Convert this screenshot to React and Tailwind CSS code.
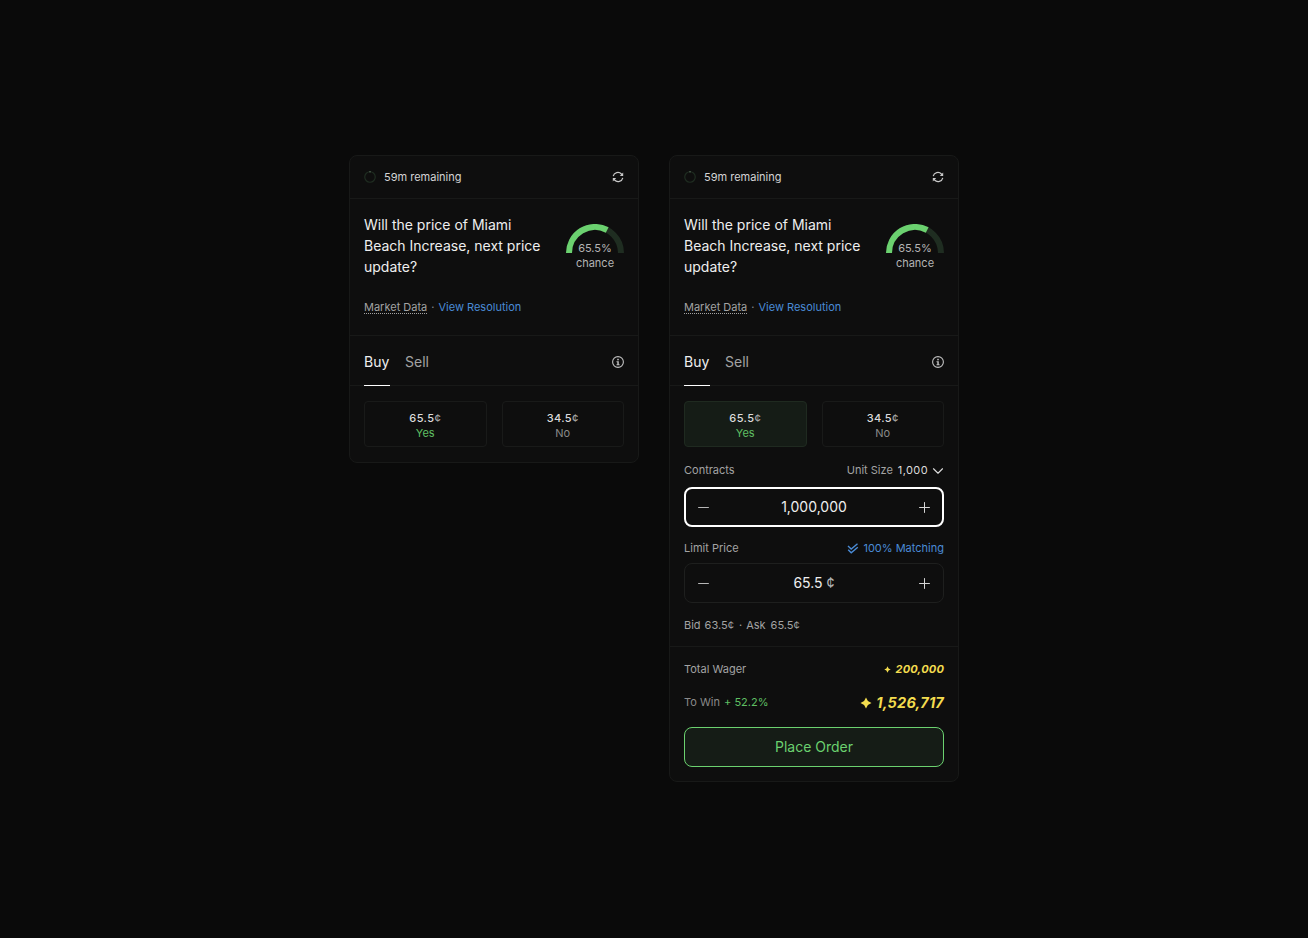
import { ChevronDown, Minus, Plus } from "lucide-react";

function RefreshIcon() {
    return (
        <svg width="12" height="12" viewBox="0 0 12 12" fill="none" className="text-[#c8c8c8]">
            <path d="M1.2 5.2 A4.8 4.8 0 0 1 9.4 3 L10.6 4.4" stroke="currentColor" strokeWidth="1.2" />
            <path d="M11.2 1.6 V5 H7.8 Z" fill="currentColor" />
            <path d="M10.8 6.8 A4.8 4.8 0 0 1 2.6 9 L1.4 7.6" stroke="currentColor" strokeWidth="1.2" />
            <path d="M0.8 10.4 V7 H4.2 Z" fill="currentColor" />
        </svg>
    );
}

function InfoIcon() {
    return (
        <svg width="12" height="12" viewBox="0 0 12 12" fill="none" className="mt-[20px] text-[#c0c0c0]">
            <circle cx="6" cy="6" r="5.4" stroke="currentColor" strokeWidth="1.1" />
            <rect x="5.2" y="2.8" width="1.6" height="1.5" fill="currentColor" />
            <path d="M4.5 5.3 H6.8 V8.2 H7.6 V9.2 H4.5 V8.2 H5.3 V6.3 H4.5 Z" fill="currentColor" />
        </svg>
    );
}

function MatchIcon() {
    return (
        <svg width="12" height="11" viewBox="0 0 12 11" fill="none" stroke="#4a8bd6" strokeWidth="1.4">
            <path d="M1 3 L4.2 6 L10.5 0.8" />
            <path d="M1.2 6.8 L4.2 9.8 L10.8 4.2" />
        </svg>
    );
}

function Spinner() {
    return (
        <svg width="12" height="12" viewBox="0 0 12 12" fill="none">
            <circle cx="6" cy="6" r="5.25" stroke="#1f2d21" strokeWidth="1.2" />
            <path d="M6 0.2 V1.4" stroke="#6f8a72" strokeWidth="1" />
        </svg>
    );
}

function Gauge() {
    return (
        <div className="relative w-[58px] h-[46px] shrink-0 mt-[10px]">
            <svg width="58" height="29" viewBox="0 0 58 29" fill="none" className="block">
                <path d="M3 29 A26 26 0 0 1 55 29" stroke="#1f2d21" strokeWidth="6" />
                <path d="M3 29 A26 26 0 0 1 41.2 6" stroke="#6bd16f" strokeWidth="6" />
            </svg>
            <div className="absolute left-0 right-0 top-[17px] text-center text-[11px] leading-[15px] text-[#b4b4b4]">
                <div>65.5%</div>
                <div>chance</div>
            </div>
        </div>
    );
}

function Outcome({ price, label, active, green }) {
    return (
        <div
            className={`flex-1 h-[46px] pt-[3px] rounded-[4px] border flex flex-col items-center justify-center ${
                active ? "bg-[#151c16] border-[#1f2a20]" : "border-[#191a19]"
            }`}
        >
            <div className="text-[11px] leading-[15px] font-medium tracking-[0.4px] text-[#dcdcdc]">
                {price}
                <span className="text-[#a3a3a3]">¢</span>
            </div>
            <div className={`text-[11px] leading-[15px] ${green ? "text-[#5fbf63]" : "text-[#8a8a8a]"}`}>{label}</div>
        </div>
    );
}

function Stepper({ focused, children }) {
    return (
        <div
            className={`h-10 rounded-lg flex items-center justify-between ${
                focused ? "border-2 border-white px-[9px]" : "border border-[#1e1f1e] px-[10px]"
            }`}
        >
            <Minus size={17} strokeWidth={1.4} className="text-[#b8b8b8]" />
            <div className="text-sm text-[#eeeeee]">{children}</div>
            <Plus size={17} strokeWidth={1.4} className="text-[#d8d8d8]" />
        </div>
    );
}

function Sparkle({ size }) {
    return (
        <svg width={size} height={size} viewBox="0 0 12 12" fill="#f3dc4e">
            <path d="M6 0.5 L7.9 4.1 L11.5 6 L7.9 7.9 L6 11.5 L4.1 7.9 L0.5 6 L4.1 4.1 Z" />
        </svg>
    );
}

function MarketCard({ expanded }) {
    return (
        <div className="w-[290px] rounded-lg border border-[#181918] bg-[#0e0e0e]">
            {/* Header */}
            <div className="h-[43px] px-[14px] flex items-center justify-between border-b border-[#181918]">
                <div className="flex items-center gap-2">
                    <Spinner />
                    <span className="text-[11px] text-[#d4d4d4]">59m remaining</span>
                </div>
                <RefreshIcon />
            </div>

            {/* Question */}
            <div className="h-[137px] px-[14px] pt-[15px] border-b border-[#181918]">
                <div className="flex justify-between">
                    <div className="w-[185px] text-sm leading-[21px] text-[#eeeeee]">
                        Will the price of Miami Beach Increase, next price update?
                    </div>
                    <Gauge />
                </div>
                <div className="mt-[23px] text-[11px] leading-[15px] flex items-start">
                    <span className="h-[14px] text-[#a3a3a3] border-b border-dotted border-[#a3a3a3]">Market Data</span>
                    <span className="text-[#8a8a8a] mx-[4px]">·</span>
                    <span className="text-[#4a8bd6]">View Resolution</span>
                </div>
            </div>

            {/* Tabs */}
            <div className="h-[50px] px-[14px] flex items-start justify-between border-b border-[#181918]">
                <div className="flex gap-[15px] text-sm">
                    <div className="w-[26px] h-[50px] leading-[52px] border-b border-white text-[#eeeeee]">Buy</div>
                    <div className="leading-[52px] text-[#a3a3a3]">Sell</div>
                </div>
                <InfoIcon />
            </div>

            {/* Outcomes */}
            <div className="px-[14px] pt-[15px] pb-[15px] flex gap-[15px]">
                <Outcome price="65.5" label="Yes" active={expanded} green />
                <Outcome price="34.5" label="No" />
            </div>

            {expanded && (
                <>
                    <div className="px-[14px] pb-[13px] border-b border-[#181918]">
                        <div className="flex items-center justify-between h-[17px] mb-2 text-[11px]">
                            <span className="text-[#a3a3a3]">Contracts</span>
                            <div className="flex items-center">
                                <span className="text-[#a3a3a3]">Unit Size</span>
                                <span className="ml-[5px] tracking-[0.4px] text-[#dcdcdc]">1,000</span>
                                <ChevronDown size={18} strokeWidth={1.5} className="ml-[1px] -mr-[3px] -my-1 text-[#dcdcdc]" />
                            </div>
                        </div>
                        <Stepper focused>1,000,000</Stepper>

                        <div className="flex items-center justify-between h-[17px] mt-[13px] mb-[6px] text-[11px]">
                            <span className="text-[#a3a3a3]">Limit Price</span>
                            <div className="flex items-center gap-[4px] text-[#4a8bd6]">
                                <MatchIcon />
                                <span>100% Matching</span>
                            </div>
                        </div>
                        <Stepper>
                            65.5 <span className="text-[#b8b8b8]">¢</span>
                        </Stepper>

                        <div className="mt-[15px] flex text-[11px] leading-[15px] text-[#a3a3a3]">
                            <span>Bid</span>
                            <span className="ml-[4px]">63.5¢</span>
                            <span className="ml-[5px] mr-[4px]">·</span>
                            <span>Ask</span>
                            <span className="ml-[5px]">65.5¢</span>
                        </div>
                    </div>

                    <div className="px-[14px] pt-[14px] pb-[14px]">
                        <div className="flex items-center justify-between h-[17px]">
                            <span className="text-[11px] text-[#a3a3a3]">Total Wager</span>
                            <div className="flex items-center gap-[5px] text-[11px] font-bold italic tracking-[0.2px] text-[#f3dc4e]">
                                <Sparkle size={7} />
                                200,000
                            </div>
                        </div>
                        <div className="flex items-center justify-between h-[21px] mt-[14px]">
                            <div className="text-[11px] text-[#8a8a8a]">
                                To Win <span className="ml-[1px] text-[#5fbf63]">+ 52.2%</span>
                            </div>
                            <div className="flex items-center gap-[4px] text-[14.5px] font-bold italic tracking-[0.2px] text-[#f3dc4e]">
                                <Sparkle size={12} />
                                1,526,717
                            </div>
                        </div>
                        <button className="mt-[14px] w-full h-10 rounded-lg border border-[#6bd16f] bg-[#151c16] text-sm text-[#6bd16f]">
                            Place Order
                        </button>
                    </div>
                </>
            )}
        </div>
    );
}

export default function App() {
    return (
        <div className="min-h-screen bg-[#0a0a0a] pt-[155px] flex justify-center font-['Inter',sans-serif]">
            <div className="flex items-start gap-[30px]">
                <MarketCard />
                <MarketCard expanded />
            </div>
        </div>
    );
}
